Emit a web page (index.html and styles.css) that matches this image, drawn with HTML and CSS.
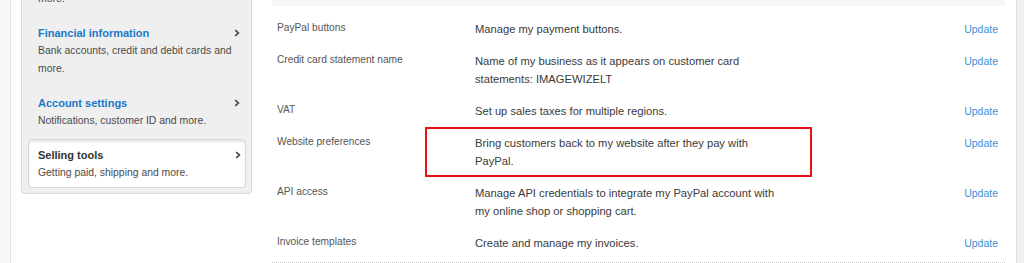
FILE: index.html
```html
<!DOCTYPE html>
<html lang="en">
<head>
<meta charset="utf-8">
<title>Selling tools</title>
<link rel="stylesheet" href="styles.css">
</head>
<body>
<div class="page">
  <div class="edge-left"></div>
  <div class="main">
    <nav class="sidebar">
      <div class="item">
        <p class="item-desc">more.</p>
      </div>
      <div class="item">
        <div class="item-head">
          <a class="item-title" href="#">Financial information</a>
          <svg class="chev" width="6" height="8" viewBox="0 0 6 8"><path d="M1.2 1.2 L4.4 4 L1.2 6.8" fill="none" stroke="#444" stroke-width="1.6"/></svg>
        </div>
        <p class="item-desc">Bank accounts, credit and debit cards and more.</p>
      </div>
      <div class="item">
        <div class="item-head">
          <a class="item-title" href="#">Account settings</a>
          <svg class="chev" width="6" height="8" viewBox="0 0 6 8"><path d="M1.2 1.2 L4.4 4 L1.2 6.8" fill="none" stroke="#444" stroke-width="1.6"/></svg>
        </div>
        <p class="item-desc">Notifications, customer ID and more.</p>
      </div>
      <div class="item item-active">
        <div class="item-head">
          <span class="item-title">Selling tools</span>
          <svg class="chev" width="6" height="8" viewBox="0 0 6 8"><path d="M1.2 1.2 L4.4 4 L1.2 6.8" fill="none" stroke="#444" stroke-width="1.6"/></svg>
        </div>
        <p class="item-desc">Getting paid, shipping and more.</p>
      </div>
    </nav>
    <section class="content">
      <div class="band"></div>
      <div class="rows">
        <div class="row">
          <div class="label">PayPal buttons</div>
          <div class="desc">Manage my payment buttons.</div>
          <a class="update" href="#">Update</a>
        </div>
        <div class="row">
          <div class="label">Credit card statement name</div>
          <div class="desc">Name of my business as it appears on customer card statements: IMAGEWIZELT</div>
          <a class="update" href="#">Update</a>
        </div>
        <div class="row">
          <div class="label">VAT</div>
          <div class="desc">Set up sales taxes for multiple regions.</div>
          <a class="update" href="#">Update</a>
        </div>
        <div class="row">
          <div class="label">Website preferences</div>
          <div class="desc">Bring customers back to my website after they pay with PayPal.</div>
          <a class="update" href="#">Update</a>
          <div class="highlight"></div>
        </div>
        <div class="row">
          <div class="label">API access</div>
          <div class="desc">Manage API credentials to integrate my PayPal account with my online shop or shopping cart.</div>
          <a class="update" href="#">Update</a>
        </div>
        <div class="row">
          <div class="label">Invoice templates</div>
          <div class="desc">Create and manage my invoices.</div>
          <a class="update" href="#">Update</a>
        </div>
      </div>
    </section>
  </div>
  <div class="edge-right"></div>
</div>
</body>
</html>
```
FILE: styles.css
```css
* { box-sizing: border-box; }
html, body { margin: 0; padding: 0; }
body {
  font-family: "Liberation Sans", Arial, Helvetica, sans-serif;
  background: #f7f8fa;
  height: 263px;
  overflow: hidden;
}
p { margin: 0; }
a { text-decoration: none; }

.page { display: flex; height: 263px; }
.edge-left { width: 10px; flex: none; }
.edge-right { width: 7px; flex: none; background: #f0f0f0; }
.main {
  width: 1007px;
  flex: none;
  background: #fff;
  border-left: 1px solid #e2e2e4;
  border-right: 1px solid #e2e2e2;
  display: flex;
  align-items: flex-start;
}

/* Sidebar */
.sidebar {
  width: 231px;
  margin-left: 10px;
  margin-top: -10px;
  background: #efefef;
  border: 1px solid #dadada;
  border-top: none;
  border-radius: 0 0 4px 4px;
  padding-bottom: 5px;
}
.item { padding: 8px 11px 8px 16px; }
.item:first-child { padding-top: 0; }
.item-head { display: flex; justify-content: space-between; align-items: center; height: 18px; }
.item-title { font-size: 11px; font-weight: bold; color: #1a78c6; line-height: 18px; }
.item-desc { font-size: 10.4px; line-height: 18px; color: #4a4a4a; }
.chev { display: block; }
.item-active {
  margin: 1px 5px 0 6px;
  padding: 6px 4px 5px 9px;
  background: #fff;
  border: 1px solid #d8d8d8;
  border-radius: 4px;
  box-shadow: inset 0 2px 2px rgba(0, 0, 0, 0.10);
}
.item-active .item-title { color: #333; }

/* Content */
.content { width: 733px; margin-left: 20px; }
.band { height: 6px; background: #f6f6f6; }
.rows { padding: 7px 0 3px; border-bottom: 1px dotted #cfcfcf; }
.row {
  position: relative;
  display: grid;
  grid-template-columns: 198px 310px 1fr;
  align-items: start;
  padding: 7px 7px 7px 5px;
}
.label { font-size: 10.2px; line-height: 12px; padding-top: 2px; color: #555; }
.desc { font-size: 11.2px; line-height: 18px; color: #3a3a3a; }
.update { justify-self: end; font-size: 10.5px; line-height: 18px; color: #3d8fd6; }
.highlight {
  position: absolute;
  left: 153px;
  top: 0;
  width: 387px;
  height: 50px;
  border: 2px solid #e8121c;
}
```
